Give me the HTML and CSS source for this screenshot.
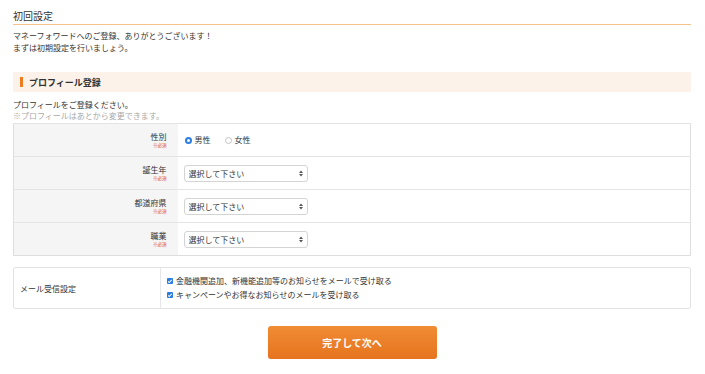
FILE: index.html
```html
<!DOCTYPE html>
<html lang="ja">
<head>
    <meta charset="UTF-8">
    <meta name="viewport" content="width=device-width, initial-scale=1.0">
    <title>初回設定</title>
    <link rel="stylesheet" href="styles.css">
</head>
<body>

    <div class="container">
        <h1 class="page-title">初回設定</h1>

        <p class="intro">マネーフォワードへのご登録、ありがとうございます！<br>まずは初期設定を行いましょう。</p>

        <h2 class="section-title"><span class="bar"></span>プロフィール登録</h2>

        <p class="lead">プロフィールをご登録ください。<br><span class="note">※プロフィールはあとから変更できます。</span></p>

        <table class="form-table">
            <tr>
                <th><span class="label">性別</span><span class="req">※必須</span></th>
                <td>
                    <div class="radios">
                        <label class="radio"><input type="radio" name="sex" checked>男性</label>
                        <label class="radio"><input type="radio" name="sex">女性</label>
                    </div>
                </td>
            </tr>
            <tr>
                <th><span class="label">誕生年</span><span class="req">※必須</span></th>
                <td>
                    <div class="select-wrap">
                        <select><option>選択して下さい</option></select>
                        <svg class="arrows" width="4" height="7" viewBox="0 0 4 7"><path d="M0 3 L2 0.5 L4 3 Z M0 4 L2 6.5 L4 4 Z" fill="#555"/></svg>
                    </div>
                </td>
            </tr>
            <tr>
                <th><span class="label">都道府県</span><span class="req">※必須</span></th>
                <td>
                    <div class="select-wrap">
                        <select><option>選択して下さい</option></select>
                        <svg class="arrows" width="4" height="7" viewBox="0 0 4 7"><path d="M0 3 L2 0.5 L4 3 Z M0 4 L2 6.5 L4 4 Z" fill="#555"/></svg>
                    </div>
                </td>
            </tr>
            <tr>
                <th><span class="label">職業</span><span class="req">※必須</span></th>
                <td>
                    <div class="select-wrap">
                        <select><option>選択して下さい</option></select>
                        <svg class="arrows" width="4" height="7" viewBox="0 0 4 7"><path d="M0 3 L2 0.5 L4 3 Z M0 4 L2 6.5 L4 4 Z" fill="#555"/></svg>
                    </div>
                </td>
            </tr>
        </table>

        <div class="mail-box">
            <div class="mail-label">メール受信設定</div>
            <div class="mail-options">
                <label class="check"><input type="checkbox" checked>金融機関追加、新機能追加等のお知らせをメールで受け取る</label>
                <label class="check"><input type="checkbox" checked>キャンペーンやお得なお知らせのメールを受け取る</label>
            </div>
        </div>

        <div class="actions">
            <button class="button">完了して次へ</button>
        </div>
    </div>

</body>
</html>
```

FILE: styles.css
```css
body {
    font-family: 'Noto Sans CJK JP', 'Noto Sans', sans-serif;
    background-color: #fff;
    color: #333;
    margin: 0;
    padding: 0;
}

.container {
    padding: 0 14px 0 13px;
}

.page-title {
    font-size: 10px;
    font-weight: normal;
    line-height: 14px;
    margin: 0;
    padding: 9px 0 1px;
    border-bottom: 1px solid #f5c48d;
}

.intro {
    font-size: 8px;
    line-height: 12px;
    margin: 5px 0 0;
}

.section-title {
    display: flex;
    align-items: center;
    height: 20px;
    margin: 18px 0 0;
    padding-left: 7px;
    background-color: #fdf2e9;
    font-size: 9px;
    font-weight: bold;
}

.section-title .bar {
    width: 3px;
    height: 10px;
    background-color: #ee7d22;
    margin-right: 6px;
}

.lead {
    font-size: 8px;
    line-height: 11px;
    margin: 7px 0 0;
}

.note {
    color: #a8a8a8;
}

.form-table {
    width: 100%;
    border-collapse: collapse;
    margin-top: 2px;
    border: 1px solid #dedede;
    font-size: 8px;
    line-height: 1;
}

.form-table th,
.form-table td {
    height: 32px;
    padding: 0;
    border-top: 1px solid #e4e4e4;
}

.form-table th {
    width: 164px;
    background-color: #f5f5f5;
    text-align: right;
    padding-right: 11px;
    font-weight: normal;
    box-sizing: border-box;
}

.form-table td {
    padding-left: 6px;
}

.label {
    display: block;
    font-size: 8px;
    line-height: 10px;
}

.req {
    display: block;
    font-size: 4.5px;
    line-height: 7px;
    color: #d9443a;
}

.radios {
    display: flex;
    align-items: center;
}

.radio {
    display: flex;
    align-items: center;
    font-size: 8px;
    margin-right: 13px;
    margin-left: 1px;
}

.radio input {
    appearance: none;
    width: 7px;
    height: 7px;
    margin: 0 3px 0 0;
    border: 1px solid #c4c4c4;
    border-radius: 50%;
    background-color: #fff;
    box-sizing: border-box;
}

.radio input:checked {
    border: 2px solid #2b7de0;
    background-color: #fff;
}

.select-wrap {
    position: relative;
    width: 124px;
}

.select-wrap select {
    display: block;
    appearance: none;
    width: 124px;
    height: 17px;
    padding: 0 0 0 4px;
    border: 1px solid #d4d4d4;
    border-radius: 3px;
    background-color: #fff;
    font-family: inherit;
    font-size: 8px;
    color: #333;
}

.select-wrap .arrows {
    position: absolute;
    right: 5px;
    top: 5px;
}

.mail-box {
    display: flex;
    margin-top: 11px;
    height: 42px;
    border: 1px solid #e2e2e2;
    border-radius: 3px;
    box-sizing: border-box;
}

.mail-label {
    width: 147px;
    display: flex;
    align-items: center;
    padding-left: 6px;
    font-size: 8px;
    border-right: 1px solid #e6e6e6;
    box-sizing: border-box;
}

.mail-options {
    display: flex;
    flex-direction: column;
    justify-content: center;
    padding-left: 6px;
    gap: 2px;
}

.check {
    display: flex;
    align-items: center;
    font-size: 8px;
    line-height: 12px;
}

.check input {
    appearance: none;
    position: relative;
    width: 6px;
    height: 6px;
    margin: 0 3px 0 0;
    border-radius: 1px;
    background-color: #2b7de0;
}

.check input::after {
    content: "";
    position: absolute;
    left: 2px;
    top: 0.5px;
    width: 1px;
    height: 3px;
    border: solid #fff;
    border-width: 0 1px 1px 0;
    transform: rotate(45deg);
}

.actions {
    display: flex;
    justify-content: center;
    margin-top: 17px;
}

.button {
    width: 169px;
    height: 33px;
    border: none;
    border-radius: 3px;
    background: linear-gradient(#f08c34, #e6741f);
    color: #fff;
    font-family: inherit;
    font-size: 10px;
    font-weight: bold;
    box-shadow: 0 1px 1px rgba(0, 0, 0, 0.15);
}
```
